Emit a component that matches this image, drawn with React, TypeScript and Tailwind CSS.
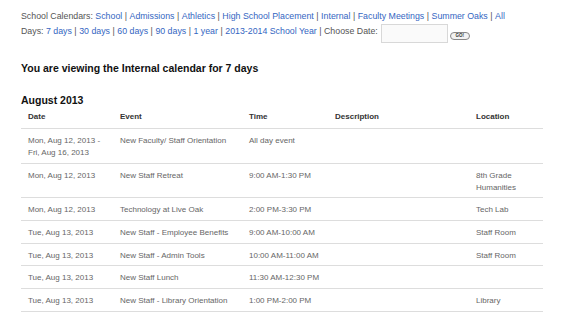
import React from "react";

const cals = ["School", "Admissions", "Athletics", "High School Placement", "Internal", "Faculty Meetings", "Summer Oaks", "All"];
const days = ["7 days", "30 days", "60 days", "90 days", "1 year", "2013-2014 School Year"];

const rows: { date: string[]; event: string; time: string; desc: string; loc: string[] }[] = [
  { date: ["Mon, Aug 12, 2013 -", "Fri, Aug 16, 2013"], event: "New Faculty/ Staff Orientation", time: "All day event", desc: "", loc: [] },
  { date: ["Mon, Aug 12, 2013"], event: "New Staff Retreat", time: "9:00 AM-1:30 PM", desc: "", loc: ["8th Grade", "Humanities"] },
  { date: ["Mon, Aug 12, 2013"], event: "Technology at Live Oak", time: "2:00 PM-3:30 PM", desc: "", loc: ["Tech Lab"] },
  { date: ["Tue, Aug 13, 2013"], event: "New Staff - Employee Benefits", time: "9:00 AM-10:00 AM", desc: "", loc: ["Staff Room"] },
  { date: ["Tue, Aug 13, 2013"], event: "New Staff - Admin Tools", time: "10:00 AM-11:00 AM", desc: "", loc: ["Staff Room"] },
  { date: ["Tue, Aug 13, 2013"], event: "New Staff Lunch", time: "11:30 AM-12:30 PM", desc: "", loc: [] },
  { date: ["Tue, Aug 13, 2013"], event: "New Staff - Library Orientation", time: "1:00 PM-2:00 PM", desc: "", loc: ["Library"] },
];

function Sep() {
  return <span className="mx-[2.5px] text-[#555]">|</span>;
}

export default function App() {
  return (
    <div
      className="w-[568px] h-[320px] overflow-hidden bg-white pl-[21px] pt-[9px] text-[#555]"
      style={{ fontFamily: '"Liberation Sans", Arial, sans-serif' }}
    >
      <div className="text-[8.8px] leading-[15px] whitespace-nowrap">
        <span>School Calendars: </span>
        {cals.map((c, i) => (
          <React.Fragment key={c}>
            {i > 0 && <Sep />}
            <span className="text-[#3466c2]">{c}</span>
          </React.Fragment>
        ))}
      </div>
      <div className="flex items-start text-[8.8px] leading-[15px] whitespace-nowrap">
        <span>Days:&nbsp;</span>
        <span>
          {days.map((d, i) => (
            <React.Fragment key={d}>
              {i > 0 && <Sep />}
              <span className="text-[#3466c2]">{d}</span>
            </React.Fragment>
          ))}
          <Sep />
          <span>Choose Date:</span>
        </span>
        <div className="ml-[3px] w-[67px] h-[19px] border border-[#d8d8d8] bg-[#fafafa]" />
        <div className="ml-[2px] mt-[8px] w-[20px] h-[8px] rounded-full border border-[#888] bg-[#f2f2f2] flex items-center justify-center text-[4.5px] leading-none text-[#333] font-bold">
          GO!
        </div>
      </div>

      <h1 className="mt-[19px] text-[10.5px] leading-[13px] font-bold text-[#111]">
        You are viewing the Internal calendar for 7 days
      </h1>
      <h2 className="mt-[19px] text-[10.5px] leading-[13px] font-bold text-[#111]">August 2013</h2>

      <table className="mt-[3px] w-[522px] border-collapse text-[8px] leading-[12px] table-fixed">
        <colgroup>
          <col className="w-[92px]" />
          <col className="w-[129px]" />
          <col className="w-[86px]" />
          <col className="w-[141px]" />
          <col className="w-[74px]" />
        </colgroup>
        <thead>
          <tr className="border-b border-[#ddd] text-[#333] font-bold text-left">
            <th className="pl-[7px] pt-[1px] pb-[5px] font-bold">Date</th>
            <th className="pl-[7px] pt-[1px] pb-[5px] font-bold">Event</th>
            <th className="pl-[7px] pt-[1px] pb-[5px] font-bold">Time</th>
            <th className="pl-[7px] pt-[1px] pb-[5px] font-bold">Description</th>
            <th className="pl-[7px] pt-[1px] pb-[5px] font-bold">Location</th>
          </tr>
        </thead>
        <tbody className="text-[#666]">
          {rows.map((r, i) => (
            <tr key={i} className="border-b border-[#ddd] align-top">
              <td className="pl-[7px] pt-[6px] pb-[3.7px]">
                {r.date.map((d) => (
                  <div key={d}>{d}</div>
                ))}
              </td>
              <td className="pl-[7px] pt-[6px] pb-[3.7px]">{r.event}</td>
              <td className="pl-[7px] pt-[6px] pb-[3.7px]">{r.time}</td>
              <td className="pl-[7px] pt-[6px] pb-[3.7px]">{r.desc}</td>
              <td className="pl-[7px] pt-[6px] pb-[3.7px]">
                {r.loc.map((d) => (
                  <div key={d}>{d}</div>
                ))}
              </td>
            </tr>
          ))}
        </tbody>
      </table>
    </div>
  );
}
